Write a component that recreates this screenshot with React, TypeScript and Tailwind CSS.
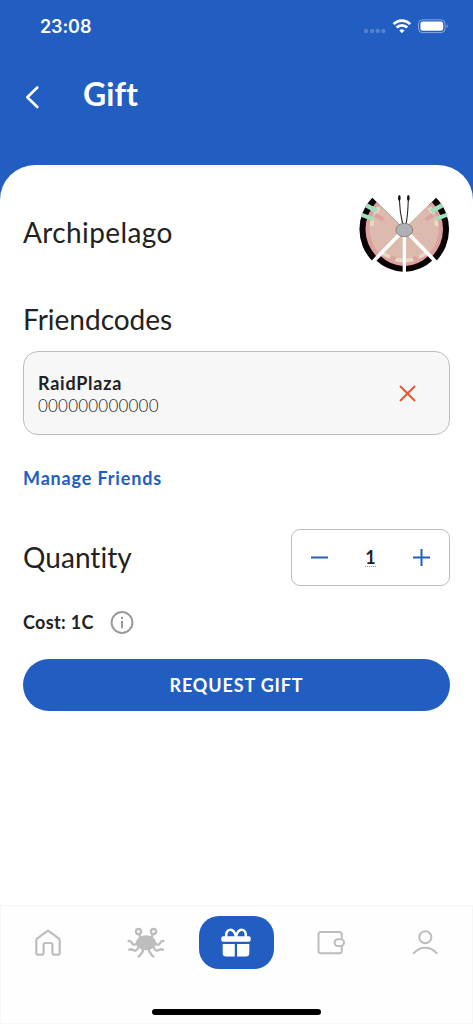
import { useState } from "react";

const StatusBar = () => (
  <div className="flex h-[53px] items-center justify-between pl-[40px] pr-[24px]">
    <span className="font-['Inter'] text-[18px] leading-none font-semibold tracking-[-0.1px] text-white">23:08</span>
    <svg width="86" height="20" viewBox="0 0 86 20" fill="none">
      <g fill="#fff" fillOpacity="0.22">
        <circle cx="3" cy="14" r="2.2" />
        <circle cx="9" cy="14" r="2.2" />
        <circle cx="14.7" cy="14" r="2.2" />
        <circle cx="20.3" cy="14" r="2.2" />
      </g>
      <g stroke="#fff" strokeWidth="2.7">
        <path d="M30.6 7.100a11.8 11.8 0 0 1 16.6 0" />
        <path d="M33.6 10.500a7.5 7.5 0 0 1 10.6 0" />
      </g>
      <path d="M38.9 16.200l-2.6-2.7a3.8 3.8 0 0 1 5.2 0z" fill="#fff" />
      <rect x="55.5" y="2.8" width="26.6" height="12.800" rx="4" stroke="#fff" strokeOpacity="0.45" />
      <rect x="57.4" y="4.600" width="22.8" height="9.200" rx="2.5" fill="#fff" />
      <path d="M83.6 7.200v4c1.4-.5 1.4-3.5 0-4z" fill="#fff" fillOpacity="0.5" />
    </svg>
  </div>
);

const SideWing = () => (
  <g>
    <path d="M178 148L82 53A136 136 0 0 0 82 243Z" fill="#080002" />
    <path d="M178 148L95 66A117 117 0 0 0 95 230Z" fill="#dfa0a0" />
    <path d="M178 148L104 75A104 104 0 0 0 104 221Z" fill="#dcbaad" />
    <path d="M96 79l11 9-12 16-10-5zM76 121l12-3-1 19-12 1z" fill="#e5dac4" />
    <path d="M94 100l24 14-7 10-22-13z" fill="#dfa0a0" />
    <path d="M67 70l33 18-7 12-33-18zM50 98l36 13-3 13-35-14z" fill="#a3dfba" />
  </g>
);

const BottomWing = () => (
  <g>
    <path d="M178 148L92 240A127 127 0 0 0 174 275V148Z" fill="#080002" />
    <path d="M178 148L104 226A110 110 0 0 0 174 258V148Z" fill="#dfa0a0" />
    <path d="M178 148L109 220A102 102 0 0 0 174 248V148Z" fill="#dcbaad" />
    <path d="M117 216l19 11-5 8-22-11zM153 234l20 1v12l-23-3z" fill="#e5dac4" />
    <path d="M141 227l12 4-4 12-13-4z" fill="#dfa0a0" />
  </g>
);

const Butterfly = () => (
  <svg width="92" height="80" viewBox="39 36 276 240" fill="none">
    <SideWing />
    <g transform="translate(355.5 0) scale(-1 1)">
      <SideWing />
    </g>
    <BottomWing />
    <g transform="translate(356 0) scale(-1 1)">
      <BottomWing />
    </g>
    <path d="M178 148L84 245M178 148L272 245" stroke="#fff" strokeWidth="11" />
    <path d="M178 148V278" stroke="#fff" strokeWidth="10" />
    <path d="M173 132C168 112 164 86 163 58M183 132C188 112 189 86 190 58" stroke="#222" strokeWidth="3.2" />
    <ellipse cx="163" cy="54" rx="4" ry="9" fill="#111" />
    <ellipse cx="190" cy="54" rx="4" ry="9" fill="#111" />
    <path d="M153 150c0-12 12-20 25-20s25 8 25 20-12 20-25 20-25-8-25-20z" fill="#aeb0b4" stroke="#77736f" strokeWidth="2.5" />
  </svg>
);

const HomeIcon = () => (
  <svg width="28" height="28" viewBox="0 0 28 28" fill="none" stroke="#bdbdbd" strokeWidth="2.2" strokeLinejoin="round">
    <path d="M14 1.600L3.300 9.400q-1 .8-1 2V23.700q0 2 2 2h3.300q2 0 2-2V16q0-2 2-2h4.800q2 0 2 2v7.700q0 2 2 2h3.300q2 0 2-2V11.400q0-1.200-1-2z" />
  </svg>
);

const CrabIcon = () => (
  <svg width="38" height="32" viewBox="0 0 38 32" fill="none" stroke="#bdbdbd" strokeWidth="2.3" strokeLinecap="round">
    <ellipse cx="19" cy="15.800" rx="10" ry="7.500" fill="#bdbdbd" stroke="none" />
    <circle cx="11.500" cy="4.600" r="2.600" />
    <circle cx="26.500" cy="4.600" r="2.600" />
    <path d="M12.400 7.500l1.200 4.200M25.600 7.500l-1.200 4.200" />
    <path d="M10.500 15.500c-2 3-4.500 2.600-5.300 1S3 13.800 1.700 14M27.500 15.500c2 3 4.500 2.600 5.300 1s2.200-2.700 3.500-2.500" />
    <path d="M11.500 19.500c-1 4-3.700 4.800-5.500 3.500-1.500-1-2.600-1-3.900-.3M26.500 19.500c1 4 3.700 4.800 5.500 3.500 1.500-1 2.600-1 3.900-.3" />
    <path d="M16 22.400c.4 3.200-1.300 3.400-2.200 4.700-.8 1.500-1 2.400-2.300 2.400M22 22.400c-.4 3.200 1.300 3.400 2.200 4.700.8 1.500 1 2.400 2.300 2.400" />
  </svg>
);

const GiftIcon = () => (
  <svg width="30" height="30" viewBox="0 0 30 30" fill="none">
    <path d="M15 9C14 4.500 12 1.800 9.500 1.800 6.300 1.800 4.500 4.800 5.300 9M15 9C16 4.500 18 1.800 20.500 1.800c3.200 0 5 3 4.200 7.200" stroke="#fff" strokeWidth="2.500" />
    <rect x="0.300" y="8.200" width="29.400" height="5.600" rx="1.800" fill="#fff" />
    <path d="M1.700 16h12.100v12.500H5q-3.300 0-3.300-3.300zM16 16h12.300v9.200q0 3.300-3.300 3.300h-9z" fill="#fff" />
  </svg>
);

const WalletIcon = () => (
  <svg width="28" height="26" viewBox="0 0 28 26" fill="none" stroke="#bdbdbd" strokeWidth="2">
    <path d="M24.800 9V4.500q0-2.500-2.500-2.500H4Q1.500 2 1.500 4.500v16.200q0 2.500 2.500 2.500h18.300q2.500 0 2.500-2.500v-4.500" />
    <rect x="17.600" y="9.200" width="9.400" height="6.800" rx="3.200" />
  </svg>
);

const UserIcon = () => (
  <svg width="26" height="26" viewBox="0 0 26 26" fill="none" stroke="#bdbdbd" strokeWidth="2" strokeLinecap="round">
    <circle cx="13.300" cy="7.300" r="6" />
    <path d="M1.900 23.200c6.200-7.300 16.600-7.300 22.800 0" />
  </svg>
);

export default function App() {
  const [quantity, setQuantity] = useState(1);

  return (
    <div className="flex h-[1024px] w-[473px] flex-col overflow-hidden bg-[#225ec1] font-['Lato',sans-serif] text-[#222]">
      <header className="h-[165px] shrink-0">
        <StatusBar />
        <div className="flex h-[87px] items-center pl-[25px] text-white">
          <button aria-label="Back">
            <svg width="15" height="24" viewBox="0 0 15 24" fill="none" stroke="currentColor" strokeWidth="2.6" strokeLinecap="round" strokeLinejoin="round">
              <path d="M12.300 2.500L2.300 12.300l10 9.700" />
            </svg>
          </button>
          <h1 className="mb-[6px] ml-[43px] text-[32px] leading-[40px] font-bold tracking-[0.1px]">Gift</h1>
        </div>
      </header>

      <div className="flex flex-1 flex-col rounded-t-[35px] bg-white">
        <main className="flex-1 px-[23px] pt-[27px]">
          <div className="flex h-[80px] items-center justify-between">
            <h2 className="text-[28px] leading-9 tracking-[0.4px]">Archipelago</h2>
            <Butterfly />
          </div>

          <h2 className="mt-[29px] text-[28px] leading-9">Friendcodes</h2>
          <div className="mt-[14px] flex h-[84px] items-center justify-between rounded-[15px] border border-[#bdbdbd] bg-[#f7f7f7] pr-[33px] pl-[14px]">
            <div className="pt-[3px]">
              <p className="text-[18px] leading-[23px] font-bold tracking-[0.75px]">RaidPlaza</p>
              <p className="text-[17px] leading-[22px] font-light tracking-[0.2px]">000000000000</p>
            </div>
            <button aria-label="Remove friend">
              <svg width="17" height="17" viewBox="0 0 17 17" stroke="#f5522f" strokeWidth="2">
                <path d="M1 1l15 15M16 1L1 16" />
              </svg>
            </button>
          </div>

          <a href="#" className="mt-[31px] block text-[18px] leading-6 font-bold tracking-[0.85px] text-[#225ec1]">
            Manage Friends
          </a>

          <div className="mt-[39px] flex h-[57px] items-center justify-between">
            <h2 className="mb-[2px] text-[28px] leading-9 tracking-[0.05px]">Quantity</h2>
            <div className="flex h-full w-[159px] items-center justify-between rounded-[9px] border border-[#bdbdbd] px-[19px] text-[#225ec1]">
              <button aria-label="Decrease" onClick={() => setQuantity(Math.max(1, quantity - 1))}>
                <svg width="17" height="17" viewBox="0 0 17 17" stroke="currentColor" strokeWidth="2">
                  <path d="M0 8.500h17" />
                </svg>
              </button>
              <span className="border-b border-dotted border-[#999] text-[18px] leading-[17px] font-bold text-[#222]">{quantity}</span>
              <button aria-label="Increase" onClick={() => setQuantity(quantity + 1)}>
                <svg width="17" height="17" viewBox="0 0 17 17" stroke="currentColor" strokeWidth="2">
                  <path d="M0 8.500h17M8.500 0v17" />
                </svg>
              </button>
            </div>
          </div>

          <div className="mt-[24px] flex h-6 items-center gap-[16px]">
            <span className="text-[18px] leading-6 font-bold tracking-[0.35px]">Cost: 1C</span>
            <svg width="24" height="24" viewBox="0 0 24 24" fill="none" stroke="#999" strokeWidth="2">
              <circle cx="12" cy="12.500" r="10.400" />
              <path d="M12 10.800v7.500M12 6.800V9" />
            </svg>
          </div>

          <button className="mt-[25px] h-[52px] w-full rounded-full bg-[#225ec1] text-[18px] font-bold tracking-[0.85px] text-white">
            REQUEST GIFT
          </button>
        </main>

        <nav className="h-[119px] border border-[#f7f7f7] bg-[#fefefe] pt-[10px]">
          <div className="grid h-[53px] grid-cols-5 items-center justify-items-center">
            <HomeIcon />
            <div className="ml-[7px]">
              <CrabIcon />
            </div>
            <div className="flex h-[53px] w-[75px] items-center justify-center rounded-[20px] bg-[#225ec1]">
              <GiftIcon />
            </div>
            <WalletIcon />
            <UserIcon />
          </div>
          <div className="mx-auto mt-[40px] h-[6px] w-[169px] rounded-full bg-black" />
        </nav>
      </div>
    </div>
  );
}
